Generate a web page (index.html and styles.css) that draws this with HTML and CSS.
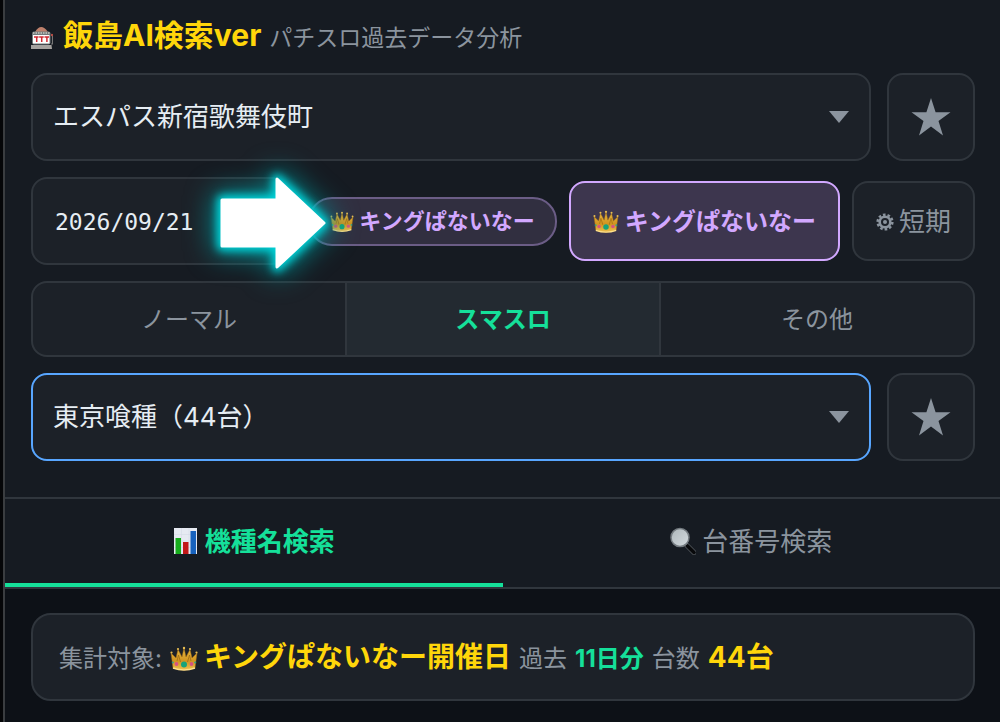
FILE: index.html
```html
<!DOCTYPE html>
<html lang="ja">
<head>
<meta charset="utf-8">
<meta name="viewport" content="width=device-width, initial-scale=1">
<title>飯島AI検索ver</title>
<link rel="stylesheet" href="styles.css">
</head>
<body>
<svg class="defs" width="0" height="0" aria-hidden="true">
  <defs>
    <linearGradient id="gold" x1="0" y1="0" x2="0" y2="1">
      <stop offset="0" stop-color="#e9bd42"/><stop offset="0.6" stop-color="#d09320"/><stop offset="1" stop-color="#ecc04e"/>
    </linearGradient>
    <linearGradient id="glass" x1="0" y1="0" x2="1" y2="1">
      <stop offset="0" stop-color="#aeb7bb"/><stop offset="1" stop-color="#d3dade"/>
    </linearGradient>
    <symbol id="crown" viewBox="0 0 28 26">
      <path d="M3 22 1 7 6 12 8 3.500 12 11 14 2 16 11 20 3.500 22 12 27 7 25 22Q14 26 3 22Z" fill="url(#gold)" stroke="#a66d13" stroke-width=".5"/>
      <path d="M7 15 8.500 9 10.500 16M17.500 16 19.500 9 21 15" fill="none" stroke="#9a6512" stroke-width=".7"/>
      <path d="M3 22Q14 26 25 22" fill="none" stroke="#ffe08a" stroke-width="1.400"/>
      <g fill="#e8bd52"><circle cx="1.500" cy="6.500" r="1.100"/><circle cx="8" cy="3" r="1.100"/><circle cx="14" cy="2" r="1.200"/><circle cx="20" cy="3" r="1.100"/><circle cx="26.500" cy="6.500" r="1.100"/></g>
      <circle cx="14" cy="18.500" r="3" fill="#16a37b"/>
      <circle cx="6.500" cy="18" r="1.900" fill="#d65382"/><circle cx="21.500" cy="18" r="1.900" fill="#d65382"/>
      <circle cx="2.800" cy="16.500" r="1" fill="#2aa188"/><circle cx="25.200" cy="16.500" r="1" fill="#2aa188"/>
    </symbol>
    <symbol id="star" viewBox="0 0 40 40">
      <path d="M20 1 24.600 15.200H39.500L27.500 24 32 38.500 20 29.600 8 38.500 12.500 24 .5 15.200H15.400Z" fill="#8b949e"/>
    </symbol>
    <symbol id="caret" viewBox="0 0 20 12"><path d="M0 0H20L10 12Z" fill="#8b949e"/></symbol>
  </defs>
</svg>
<div class="app">
  <header class="panel">
    <div class="brand">
      <svg class="brand-icon" viewBox="0 0 22 24" aria-hidden="true">
        <path d="M4 6Q10 -4 17 6Z" fill="#bd806b"/>
        <rect x="1" y="5.500" width="18.500" height="13" rx="2" fill="#747b7c"/>
        <path d="M2 7H19" stroke="#c5c6be" stroke-width="1.500" stroke-dasharray="1.500 1"/>
        <rect x="2" y="9" width="16.500" height="8.500" fill="#fff"/>
        <path d="M3 11H7.500M5.700 11V16M8.200 11H12.700M10.700 11V16M13.500 11H18M15.900 11V16" fill="none" stroke="#cf2830" stroke-width="1.500"/>
        <path d="M0 19H20.500L21 23H0Z" fill="#a5a29f"/>
        <path d="M20 18H21.500V10" fill="none" stroke="#777" stroke-width="1.200"/><circle cx="21" cy="9" r="1.200" fill="#b64f48"/>
      </svg>
      <h1 class="title">飯島AI検索ver</h1>
      <p class="subtitle">パチスロ過去データ分析</p>
    </div>

    <div class="row">
      <div class="picker">
        <select class="field" aria-label="店舗"><option>エスパス新宿歌舞伎町</option></select>
        <svg class="caret" aria-hidden="true"><use href="#caret"/></svg>
      </div>
      <button class="box fav" type="button" aria-label="店舗をお気に入りに追加"><svg class="star" aria-hidden="true"><use href="#star"/></svg></button>
    </div>

    <div class="row row-date">
      <input class="field date" type="text" aria-label="日付" value="2026/09/21">
      <span class="pill"><svg class="crown crown-s" aria-hidden="true"><use href="#crown"/></svg>キングぱないなー</span>
      <button class="box king" type="button"><svg class="crown crown-m" aria-hidden="true"><use href="#crown"/></svg>キングぱないなー</button>
      <button class="box term" type="button">
        <svg class="gear" viewBox="0 0 18 18" aria-hidden="true">
          <g fill="none" stroke="#8b949e"><circle cx="9" cy="9" r="7.300" stroke-width="2.600" stroke-dasharray="2.600 1.987"/><circle cx="9" cy="9" r="5.300" stroke-width="2.600"/></g>
          <circle cx="9" cy="9" r="2" fill="#8b949e"/>
        </svg>短期</button>
      <svg class="pointer" viewBox="0 0 106 92" aria-hidden="true">
        <path class="glow-far" d="M2 23H57V2L104 46 57 90V69H2Z"/>
        <path class="glow-near" d="M2 23H57V2L104 46 57 90V69H2Z"/>
        <path d="M2 23H57V2L104 46 57 90V69H2Z" fill="#fff" stroke="#fff" stroke-width="3" stroke-linejoin="round"/>
      </svg>
    </div>

    <div class="segments" role="group" aria-label="機種タイプ">
      <button class="segment" type="button">ノーマル</button>
      <button class="segment segment-on" type="button" aria-pressed="true">スマスロ</button>
      <button class="segment" type="button">その他</button>
    </div>

    <div class="row">
      <div class="picker">
        <select class="field field-focus" aria-label="機種"><option>東京喰種（44台）</option></select>
        <svg class="caret" aria-hidden="true"><use href="#caret"/></svg>
      </div>
      <button class="box fav" type="button" aria-label="機種をお気に入りに追加"><svg class="star" aria-hidden="true"><use href="#star"/></svg></button>
    </div>
  </header>

  <nav class="tabs">
    <button class="tab tab-on" type="button">
      <svg class="tab-icon" viewBox="0 0 26 28" aria-hidden="true">
        <rect x="1" y="1" width="23" height="26" fill="#e6eaf2"/>
        <path d="M1 7.500H24M1 14H24M1 20.500H24M8.500 1V27M16 1V27" stroke="#d3d9e4" stroke-width=".5"/>
        <rect x="2.500" y="11" width="5.500" height="16" fill="#16ad1c"/><rect x="10" y="15" width="5.500" height="12" fill="#c21818"/><rect x="17.500" y="4" width="5.500" height="23" fill="#1762bd"/>
      </svg>機種名検索</button>
    <button class="tab" type="button">
      <svg class="tab-icon" viewBox="0 0 26 28" aria-hidden="true">
        <path d="M15.500 17 24 25.500" stroke="#555b60" stroke-width="5" stroke-linecap="round"/>
        <path d="M17.500 19 24 25.500" stroke="#08090b" stroke-width="3.600" stroke-linecap="round"/>
        <circle cx="10" cy="10.500" r="9" fill="url(#glass)" stroke="#747b80" stroke-width="1.500"/>
      </svg>台番号検索</button>
  </nav>

  <main class="content">
    <p class="summary">
      <span>集計対象:</span>
      <span class="event"><svg class="crown crown-l" aria-hidden="true"><use href="#crown"/></svg><strong class="gold">キングぱないなー開催日</strong></span>
      <span>過去</span>
      <strong class="green">11日分</strong>
      <span>台数</span>
      <strong class="gold">44台</strong>
    </p>
  </main>
</div>
</body>
</html>
```
FILE: styles.css
```css
* { box-sizing: border-box; }

body {
  margin: 0;
  background: #050608;
  color: #e6edf3;
  font-family: Inter, "Noto Sans CJK JP", sans-serif;
  font-size: 24px;
}

h1, p { margin: 0; }

button, select, input {
  margin: 0;
  font: inherit;
  color: inherit;
}

svg { flex: none; }

.defs { position: absolute; }

.app {
  min-height: 100vh;
  margin-left: 3px;
  background: #0d1117;
  border-left: 2px solid #3a3d40;
}

.panel {
  display: flex;
  flex-direction: column;
  gap: 16px;
  padding: 15px 25px 36px 26px;
  background: #161b22;
  border-bottom: 2px solid #30363d;
}

.brand {
  display: flex;
  align-items: baseline;
  height: 42px;
  line-height: 40px;
}

.brand-icon {
  align-self: center;
  width: 22px;
  height: 24px;
  margin-top: 3px;
  margin-right: 10px;
}

.title {
  margin-right: 8px;
  color: #ffd60a;
  font-size: 30px;
  font-weight: 700;
}

.subtitle {
  color: #8b949e;
  font-size: 23px;
}

.row {
  display: flex;
  gap: 16px;
}

.row-date {
  position: relative;
  align-items: center;
  gap: 12px;
}

.picker {
  position: relative;
  flex: 1;
}

.field {
  width: 100%;
  height: 88px;
  padding: 0 20px 2px;
  appearance: none;
  background: #1c2128;
  border: 2px solid #30363d;
  border-radius: 16px;
  font-size: 26px;
  outline: none;
}

.field-focus { border-color: #58a6ff; }

.date {
  flex: 1;
  width: auto;
  min-width: 0;
  margin-right: 8px;
  padding: 2px 22px 0;
  font-family: "DejaVu Sans Mono", monospace;
  font-size: 23px;
}

.caret {
  position: absolute;
  top: 38px;
  right: 22px;
  width: 20px;
  height: 12px;
  pointer-events: none;
}

.box {
  display: flex;
  align-items: center;
  justify-content: center;
  height: 80px;
  padding: 0 22px 4px;
  background: #1c2128;
  border: 2px solid #30363d;
  border-radius: 16px;
  white-space: nowrap;
}

.fav {
  width: 88px;
  height: 88px;
  padding: 0;
}

.star {
  width: 40px;
  height: 40px;
}

.pill {
  position: relative;
  z-index: 1;
  display: flex;
  align-items: center;
  height: 49px;
  padding: 0 20px 4px;
  background: #312f40;
  border: 2px solid #6b5d86;
  border-radius: 24px;
  color: #d2a8ff;
  font-size: 22px;
  font-weight: 700;
  white-space: nowrap;
}

.king {
  background: #3d364e;
  border-color: #d2a8ff;
  color: #d2a8ff;
  font-weight: 700;
}

.crown-s { width: 24px; height: 22px; margin-top: 6px; margin-right: 5px; }
.crown-m { width: 26px; height: 24px; margin-top: 6px; margin-right: 6px; }
.crown-l { align-self: center; width: 28px; height: 26px; margin-top: 3px; margin-right: 6px; }

.term {
  color: #8b949e;
  font-size: 26px;
}

.gear {
  width: 18px;
  height: 18px;
  margin-top: 6px;
  margin-right: 5px;
}

.pointer {
  position: absolute;
  z-index: 2;
  left: 189px;
  top: 0;
  width: 106px;
  height: 92px;
  overflow: visible;
  pointer-events: none;
}

.glow-near {
  fill: #00d5da;
  stroke: #00d5da;
  stroke-width: 10px;
  stroke-linejoin: round;
  filter: blur(4px);
}

.glow-far {
  fill: #008c90;
  stroke: #008c90;
  stroke-width: 16px;
  stroke-linejoin: round;
  filter: blur(14px);
}

.segments {
  display: flex;
  height: 76px;
  overflow: hidden;
  background: #1c2128;
  border: 2px solid #30363d;
  border-radius: 16px;
}

.segment {
  flex: 1;
  padding: 0 0 4px;
  background: none;
  border: 0;
  color: #8b949e;
}

.segment + .segment { border-left: 2px solid #30363d; }

.segment-on {
  background: #232a31;
  color: #15e09a;
  font-weight: 700;
}

.tabs {
  display: flex;
  height: 90px;
  background: #161b22;
  border-bottom: 2px solid #30363d;
}

.tab {
  display: flex;
  flex: 1;
  align-items: center;
  justify-content: center;
  padding: 0 0 4px;
  background: none;
  border: 0;
  border-bottom: 4px solid transparent;
  color: #8b949e;
  font-size: 26px;
}

.tab-on {
  border-color: #15e09a;
  color: #15e09a;
  font-weight: 700;
}

.tab-icon {
  width: 26px;
  height: 28px;
  margin-top: 4px;
  margin-right: 6px;
}

.content { padding: 24px 25px 24px 26px; }

.summary {
  display: flex;
  align-items: baseline;
  gap: 8px;
  padding: 22px 26px 20px;
  background: #1c2128;
  border: 2px solid #30363d;
  border-radius: 20px;
  color: #8b949e;
  line-height: 40px;
}

.event {
  display: flex;
  align-items: baseline;
}

.gold {
  color: #ffd60a;
  font-size: 28px;
}

.green { color: #15e09a; }
```
